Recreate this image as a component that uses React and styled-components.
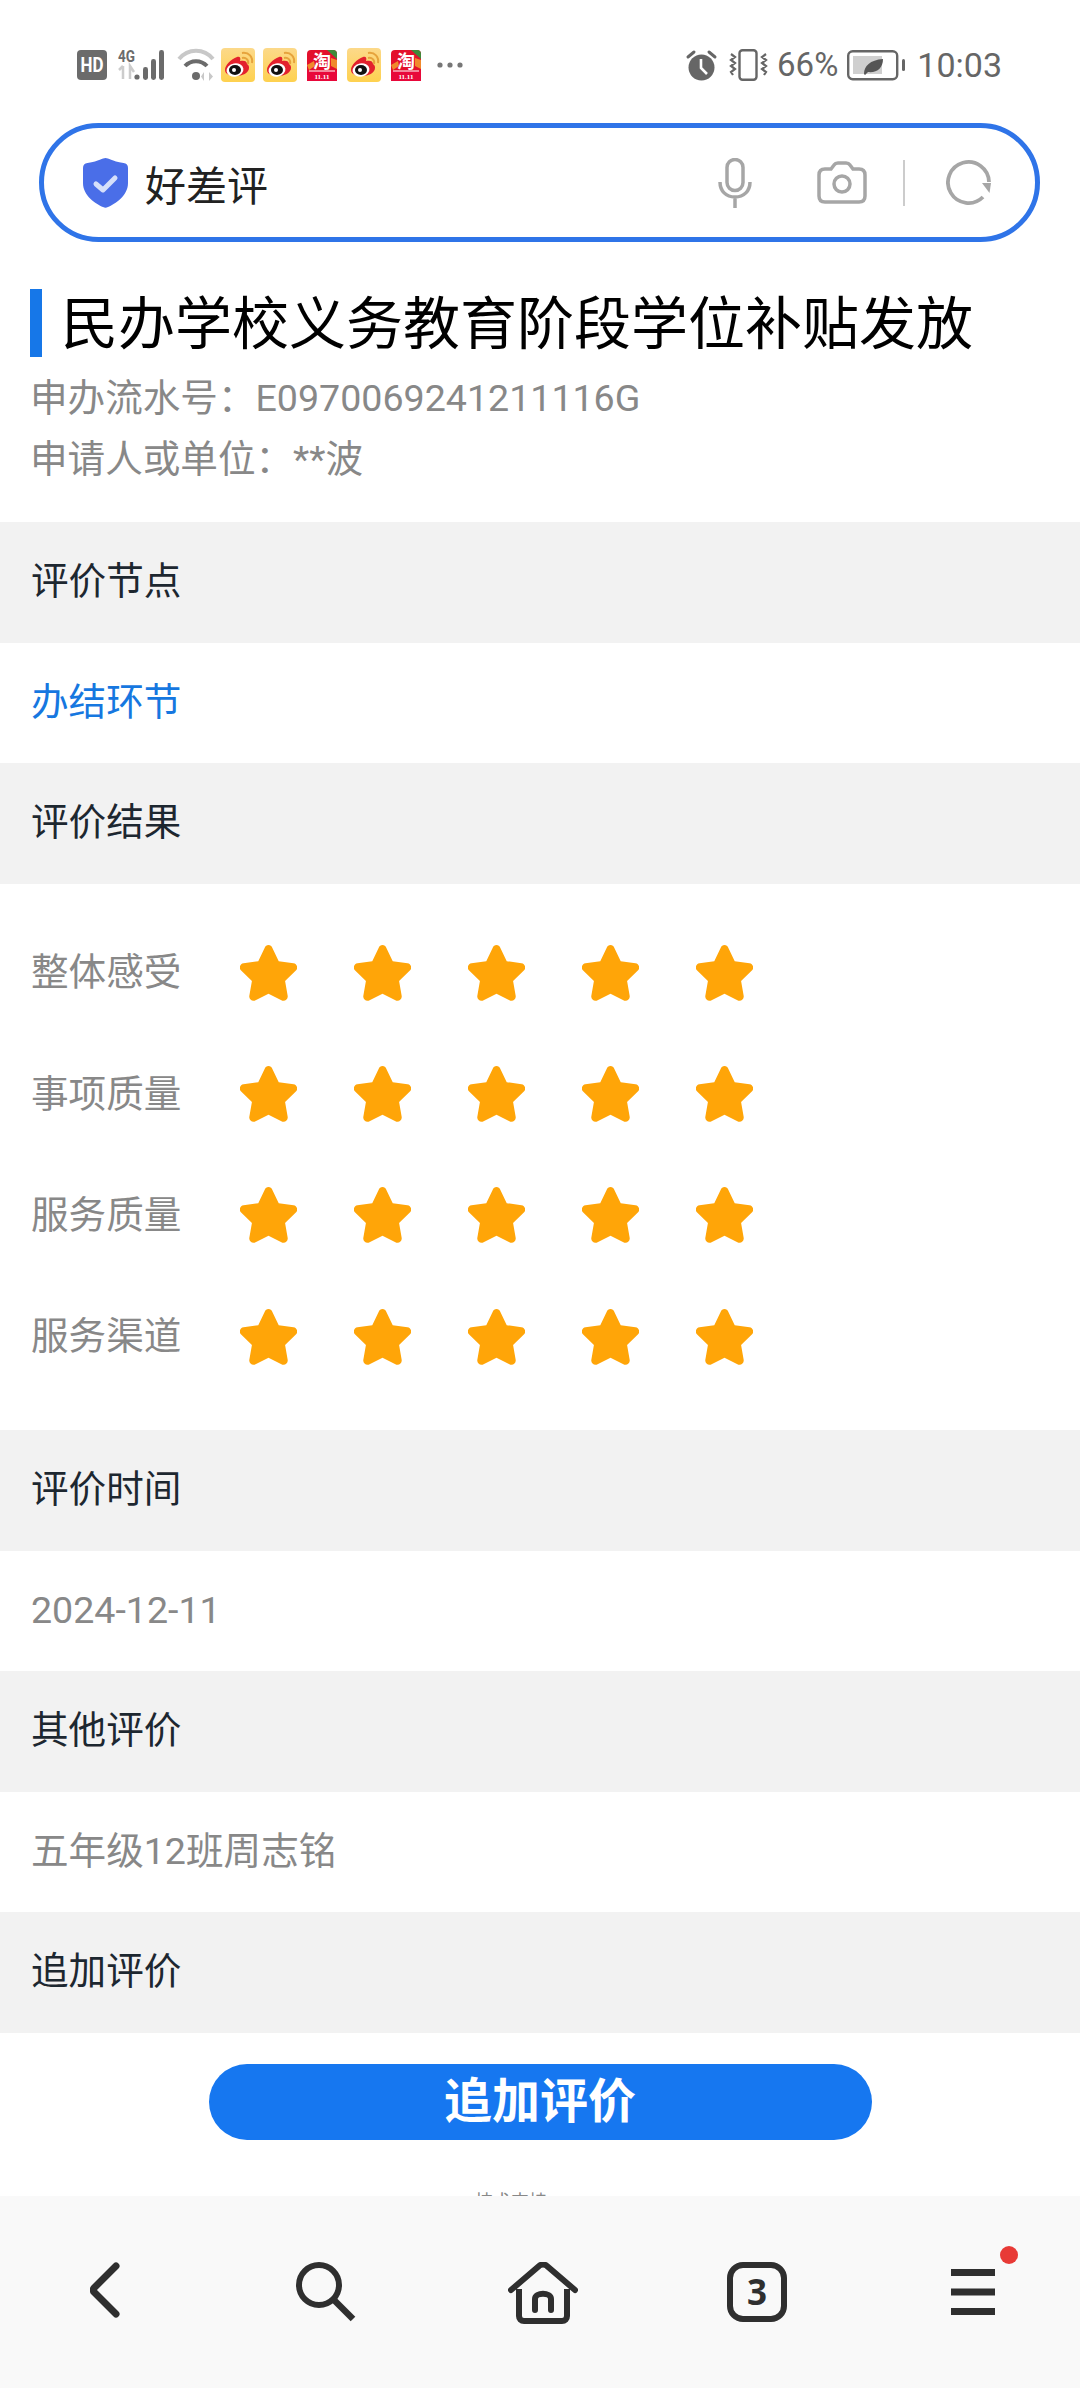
import React from 'react'
import styled, {createGlobalStyle} from 'styled-components'

const GlobalStyle = createGlobalStyle`
  html, body {
    margin: 0;
    padding: 0;
    background: #fff;
  }
  body {
    font-family: Roboto, "Noto Sans CJK SC", "Noto Sans", sans-serif;
    width: 1080px;
    height: 2388px;
    overflow: hidden;
  }
`

const Page = styled.div`
  position: relative;
  width: 1080px;
  height: 2388px;
  overflow: hidden;
  background: #fff;
`

const StatusBar = styled.div`
  height: 123px;
  box-sizing: border-box;
  padding: 48px 78px 0 77px;
  display: flex;
  justify-content: space-between;
  align-items: flex-start;
`

const StatusGroup = styled.div`
  display: flex;
  align-items: center;
  height: 34px;
`

const StatusText = styled.span`
  font-size: ${props => props.size || 34}px;
  color: #666;
  line-height: 34px;
  margin-left: ${props => props.left || 0}px;
`

const AppIconSlot = styled.svg`
  display: block;
  flex: none;
  overflow: visible;
  margin-left: ${props => props.left || 0}px;
`

const SearchBar = styled.div`
  box-sizing: border-box;
  width: 1001px;
  height: 119px;
  margin-left: 39px;
  border: 5px solid #2f74e8;
  border-radius: 60px;
  display: flex;
  align-items: center;
  padding-left: 39px;
  padding-right: 43px;
`

const SearchText = styled.div`
  font-size: 41px;
  color: #222;
  margin-left: 17px;
  flex: 1;
`

const SearchDivider = styled.div`
  width: 2px;
  height: 46px;
  background: #ccc;
  margin: 0 41px 0 36px;
`

const Head = styled.div`
  padding: 47px 30px 0;
  height: 280px;
  box-sizing: border-box;
`

const TitleRow = styled.div`
  display: flex;
  align-items: center;
  height: 68px;
  margin-bottom: 11px;
`

const TitleMark = styled.div`
  width: 12px;
  height: 68px;
  background: #1677e8;
  margin-right: 21px;
`

const Title = styled.h1`
  margin: -8px 0 0 -2px;
  font-size: 57px;
  font-weight: 400;
  color: #000;
  white-space: nowrap;
`

const MetaLine = styled.div`
  font-size: 37.6px;
  color: #888;
  height: 61px;
  line-height: 61px;
  white-space: nowrap;
`

const SectionHead = styled.div`
  height: 121px;
  line-height: 118px;
  background: #f2f2f2;
  padding-left: 31px;
  font-size: 37.6px;
  color: #1d2730;
`

const SectionBody = styled.div`
  height: 120px;
  line-height: 118px;
  padding-left: 31px;
  font-size: 37.6px;
  color: ${props => (props.active ? '#1677e0' : '#888')};
`

const Ratings = styled.div`
  height: 546px;
  box-sizing: border-box;
  padding: 28px 0 0 31px;
`

const RatingRow = styled.div`
  display: flex;
  align-items: center;
  height: 121.4px;
`

const RatingLabel = styled.div`
  width: 209px;
  font-size: 37.6px;
  color: #888;
  position: relative;
  top: -4px;
`

const StarList = styled.div`
  display: flex;
  gap: 57px;
`

const AddWrap = styled.div`
  padding-top: 31px;
  display: flex;
  justify-content: center;
`

const AddButton = styled.button`
  width: 663px;
  height: 76px;
  border: none;
  border-radius: 38px;
  background: #1677f0;
  color: #fff;
  font-family: inherit;
  font-size: 48px;
  font-weight: 700;
  line-height: 70px;
  padding: 0;
`

const FootNote = styled.div`
  margin-top: 48px;
  padding-right: 58px;
  text-align: center;
  font-size: 18px;
  line-height: 28px;
  color: #888;
`

const BottomNav = styled.nav`
  position: absolute;
  left: 0;
  right: 0;
  bottom: 0;
  height: 192px;
  background: #f9f9f9;
`

const NavIcons = styled.div`
  box-sizing: border-box;
  height: 100%;
  padding-top: 66px;
  display: flex;
  align-items: flex-start;
`

const NavButton = styled.div`
  position: relative;
  line-height: 0;
  margin-left: ${props => props.left}px;
  margin-top: ${props => props.top || 0}px;
`

const RedDot = styled.span`
  position: absolute;
  top: -23px;
  right: -23px;
  width: 18px;
  height: 18px;
  border-radius: 50%;
  background: #e83a36;
`

const HdIcon = () => (
  <AppIconSlot width="30" height="30" viewBox="0 0 30 30">
    <rect width="30" height="30" rx="4" fill="#6b6b6b" />
    <text x="15" y="22" textAnchor="middle" fontSize="20" fontWeight="700" fontFamily="Roboto" fill="#fff" textLength="23" lengthAdjust="spacingAndGlyphs">
      HD
    </text>
  </AppIconSlot>
)

const SignalIcon = () => (
  <AppIconSlot left={11} width="50" height="34" viewBox="0 0 50 34">
    <text x="0" y="14" fontSize="17" fontWeight="700" fontFamily="Roboto" fill="#6b6b6b" textLength="17" lengthAdjust="spacingAndGlyphs">
      4G
    </text>
    <path d="M5 18v13M1 22l4-4v0M12 31V18l4 6" stroke="#ccc" strokeWidth="2.5" fill="none" />
    <circle cx="19" cy="29" r="2.6" fill="#6b6b6b" />
    <rect x="25" y="19" width="5" height="13" rx="2.4" fill="#6b6b6b" />
    <rect x="33" y="11" width="5" height="21" rx="2.4" fill="#6b6b6b" />
    <rect x="41" y="2" width="5" height="30" rx="2.4" fill="#6b6b6b" />
  </AppIconSlot>
)

const WifiIcon = () => (
  <AppIconSlot left={10} width="37" height="32" viewBox="0 0 37 32">
    <path d="M1 10C10 -1 26 -1 35 10" stroke="#c8c8c8" strokeWidth="4" fill="none" />
    <path d="M7 17c6-6.500 16-6.500 22 0" stroke="#6b6b6b" strokeWidth="4" fill="none" />
    <circle cx="18" cy="27" r="4" fill="#6b6b6b" />
    <path d="M26 23v9l-3-4.5zM31 23v9l4-4.5z" fill="#c8c8c8" />
  </AppIconSlot>
)

const WeiboIcon = ({left}) => (
  <AppIconSlot left={left} width="34" height="34" viewBox="0 0 34 34">
    <defs>
      <linearGradient id="wbBg" x1="0" y1="0" x2="0" y2="1">
        <stop offset="0" stopColor="#fcd98a" />
        <stop offset="1" stopColor="#fed14f" />
      </linearGradient>
    </defs>
    <rect width="34" height="34" rx="4" fill="url(#wbBg)" />
    <path
      d="M4 22c0-5 6-11 12-13 3-1 4 1 3 4 4-1 7 0 7 3 2 1 2 3 2 4 0 5-7 8-13 8-6 0-11-2-11-6z"
      fill="#e3212d"
    />
    <ellipse cx="14" cy="22" rx="8.5" ry="6.6" fill="#fff" transform="rotate(-10 14 22)" />
    <ellipse cx="14" cy="22" rx="6" ry="5" fill="#111" />
    <circle cx="13" cy="22" r="2" fill="#fff" />
    <path d="M21 10c4-1 7 2 6 6M21 5c7-1 11 4 10 10" stroke="#e6a33c" strokeWidth="2" fill="none" />
  </AppIconSlot>
)

const TaobaoIcon = ({left}) => (
  <AppIconSlot left={left} width="30" height="31" viewBox="0 0 30 31">
    <rect width="30" height="31" rx="4" fill="#e3102c" />
    <rect x="0" y="21" width="30" height="10" fill="#e8083a" />
    <path d="M20 0h6a4 4 0 0 1 4 4v5z" fill="#3f8a3a" />
    <path d="M0 15l7-4 1 5-6 4zM24 8l6 2v9l-6-3z" fill="#f08a2c" />
    <text x="15" y="18" textAnchor="middle" fontSize="18" fontWeight="700" fontFamily="Noto Sans CJK SC" fill="#fff">
      淘
    </text>
    <rect x="2" y="20.5" width="26" height="1" fill="#fff" />
    <text x="15" y="28.5" textAnchor="middle" fontSize="7" fontWeight="700" fontFamily="Liberation Serif" fill="#fff">
      11.11
    </text>
  </AppIconSlot>
)

const MoreDots = () => (
  <AppIconSlot left={16} width="26" height="6" viewBox="0 0 26 6">
    <circle cx="3" cy="3" r="2.6" fill="#777" />
    <circle cx="13" cy="3" r="2.6" fill="#777" />
    <circle cx="23" cy="3" r="2.6" fill="#777" />
  </AppIconSlot>
)

const AlarmIcon = () => (
  <AppIconSlot width="31" height="31" viewBox="0 0 31 31">
    <circle cx="15.5" cy="17.5" r="13" fill="#666" />
    <path d="M15 9v9l6 6" stroke="#fff" strokeWidth="2.6" fill="none" />
    <path d="M2 7l6-5M29 7l-6-5" stroke="#666" strokeWidth="3" strokeLinecap="round" />
  </AppIconSlot>
)

const VibrateIcon = () => (
  <AppIconSlot left={11} width="41" height="32" viewBox="0 0 41 32">
    <rect x="11.5" y="1.2" width="17" height="29.6" rx="3" fill="none" stroke="#666" strokeWidth="2.4" />
    <path
      d="M3 5l4 3-4 3 4 3-4 3 4 3-4 3 2 3M38 5l-4 3 4 3-4 3 4 3-4 3 4 3-2 3"
      fill="none"
      stroke="#666"
      strokeWidth="2.2"
    />
  </AppIconSlot>
)

const BatteryIcon = () => (
  <AppIconSlot left={9} width="58" height="32" viewBox="0 0 58 32">
    <rect x="1.2" y="2.2" width="49" height="28" rx="4.5" fill="none" stroke="#666" strokeWidth="2.4" />
    <rect x="6" y="7" width="29" height="18" fill="#cfcfcf" />
    <rect x="55" y="10" width="3" height="12" rx="1.5" fill="#666" />
    <path d="M17 25c0-8 6-14 19-15 0 9-6 14-15 13l-3 3z" fill="#555" />
  </AppIconSlot>
)

const ShieldIcon = () => (
  <svg width="45" height="50" viewBox="0 0 45 50">
    <path
      d="M22.5 0c3 0 6 3 18 5 3 .5 4.500 2 4.500 5v15c0 13-13 21-20 24-2 1-3 1-5 0C13 46 0 38 0 25V10c0-3 1.500-4.500 4.500-5 12-2 15-5 18-5z"
      fill="#4a6ee8"
    />
    <path d="M13 26l7 6 12-12" fill="none" stroke="#d5dffa" strokeWidth="5" strokeLinecap="round" strokeLinejoin="round" />
  </svg>
)

const MicIcon = () => (
  <svg width="34" height="50" viewBox="0 0 34 50">
    <rect x="9" y="1.500" width="16" height="31" rx="8" fill="none" stroke="#a6a6a6" strokeWidth="3.500" />
    <path d="M2 24c0 9 6 15 15 15s15-6 15-15M17 39v11" fill="none" stroke="#a6a6a6" strokeWidth="3.500" />
  </svg>
)

const CameraSvg = styled.svg`
  margin-left: 65px;
`

const CameraIcon = () => (
  <CameraSvg width="50" height="43" viewBox="0 0 50 43">
    <path
      d="M8 8h6l3-4c1-1.500 2-2 4-2h8c2 0 3 .5 4 2l3 4h6c4 0 6 2 6 6v21c0 4-2 6-6 6H8c-4 0-6-2-6-6V14c0-4 2-6 6-6z"
      fill="none"
      stroke="#a6a6a6"
      strokeWidth="3.500"
    />
    <circle cx="25" cy="23" r="8" fill="none" stroke="#a6a6a6" strokeWidth="3.500" />
  </CameraSvg>
)

const RefreshIcon = () => (
  <svg width="46" height="45" viewBox="0 0 46 45">
    <path d="M37 37A20.500 20.500 0 1 1 43 22" fill="none" stroke="#a6a6a6" strokeWidth="3.800" />
    <path d="M36 23h9l-1.500 10z" fill="#a6a6a6" />
  </svg>
)

const Star = () => (
  <svg width="57" height="56" viewBox="3 2.500 52 52">
    <path
      d="M29 2.500c1.700 0 2.800 1 3.500 2.500l6 12.500 13.700 2c3.300.5 4.600 4.400 2.200 6.700l-10 9.700 2.400 13.700c.6 3.300-2.900 5.800-5.800 4.200L29 47.800l-12 6c-2.900 1.600-6.400-.9-5.800-4.200l2.400-13.700-10-9.700c-2.400-2.300-1.100-6.200 2.200-6.700l13.700-2 6-12.500c.7-1.500 1.800-2.500 3.500-2.500z"
      fill="#ffa508"
    />
  </svg>
)

const navStroke = '#2f2f2f'

const BackIcon = () => (
  <svg width="30" height="56" viewBox="0 0 30 56">
    <path d="M26 4L4 26c-1 1-1 3 0 4l22 22" fill="none" stroke={navStroke} strokeWidth="7" strokeLinecap="round" strokeLinejoin="round" />
  </svg>
)

const SearchNavIcon = () => (
  <svg width="60" height="60" viewBox="0 0 60 60">
    <circle cx="23" cy="23" r="20" fill="none" stroke={navStroke} strokeWidth="6" />
    <path d="M37 37l20 20" fill="none" stroke={navStroke} strokeWidth="6.500" />
  </svg>
)

const HomeIcon = () => (
  <svg width="70" height="62" viewBox="0 0 70 62">
    <path d="M3 28L31 4c2-2 6-2 8 0l28 24" fill="none" stroke={navStroke} strokeWidth="6" strokeLinecap="round" />
    <path d="M11 27v27c0 3 2 5 5 5h38c3 0 5-2 5-5V27" fill="none" stroke={navStroke} strokeWidth="6" />
    <path d="M27 48V37c0-7 16-7 16 0v11" fill="none" stroke={navStroke} strokeWidth="6" strokeLinecap="round" />
  </svg>
)

const TabsIcon = () => (
  <svg width="60" height="60" viewBox="0 0 60 60">
    <rect x="3" y="3" width="54" height="54" rx="13" fill="none" stroke={navStroke} strokeWidth="6" />
    <text x="30" y="43" textAnchor="middle" fontSize="35" fontWeight="700" fontFamily="Noto Sans" fill={navStroke}>
      3
    </text>
  </svg>
)

const MenuIcon = () => (
  <svg width="44" height="46" viewBox="0 0 44 46">
    <rect y="0" width="44" height="7" fill={navStroke} />
    <rect y="19.500" width="44" height="7" fill={navStroke} />
    <rect y="39" width="44" height="7" fill={navStroke} />
  </svg>
)

const ratingRows = ['整体感受', '事项质量', '服务质量', '服务渠道']

const App = () => (
  <Page>
    <GlobalStyle />
    <StatusBar>
      <StatusGroup>
        <HdIcon />
        <SignalIcon />
        <WifiIcon />
        <WeiboIcon left={6} />
        <WeiboIcon left={8} />
        <TaobaoIcon left={10} />
        <WeiboIcon left={10} />
        <TaobaoIcon left={10} />
        <MoreDots />
      </StatusGroup>
      <StatusGroup>
        <AlarmIcon />
        <VibrateIcon />
        <StatusText size={33} left={8}>
          66%
        </StatusText>
        <BatteryIcon />
        <StatusText left={12}>10:03</StatusText>
      </StatusGroup>
    </StatusBar>

    <SearchBar>
      <ShieldIcon />
      <SearchText>好差评</SearchText>
      <MicIcon />
      <CameraIcon />
      <SearchDivider />
      <RefreshIcon />
    </SearchBar>

    <Head>
      <TitleRow>
        <TitleMark />
        <Title>民办学校义务教育阶段学位补贴发放</Title>
      </TitleRow>
      <MetaLine>{'申办流水号\uFF1AE0970069241211116G'}</MetaLine>
      <MetaLine>{'申请人或单位\uFF1A**波'}</MetaLine>
    </Head>

    <SectionHead>评价节点</SectionHead>
    <SectionBody active>办结环节</SectionBody>
    <SectionHead>评价结果</SectionHead>
    <Ratings>
      {ratingRows.map(label => (
        <RatingRow key={label}>
          <RatingLabel>{label}</RatingLabel>
          <StarList>
            {[1, 2, 3, 4, 5].map(n => (
              <Star key={n} />
            ))}
          </StarList>
        </RatingRow>
      ))}
    </Ratings>
    <SectionHead>评价时间</SectionHead>
    <SectionBody>2024-12-11</SectionBody>
    <SectionHead>其他评价</SectionHead>
    <SectionBody>五年级12班周志铭</SectionBody>
    <SectionHead>追加评价</SectionHead>
    <AddWrap>
      <AddButton type="button">追加评价</AddButton>
    </AddWrap>
    <FootNote>技术支持</FootNote>

    <BottomNav>
      <NavIcons>
        <NavButton left={90}>
          <BackIcon />
        </NavButton>
        <NavButton left={176}>
          <SearchNavIcon />
        </NavButton>
        <NavButton left={152}>
          <HomeIcon />
        </NavButton>
        <NavButton left={149}>
          <TabsIcon />
        </NavButton>
        <NavButton left={164} top={7}>
          <MenuIcon />
          <RedDot />
        </NavButton>
      </NavIcons>
    </BottomNav>
  </Page>
)

export default App
